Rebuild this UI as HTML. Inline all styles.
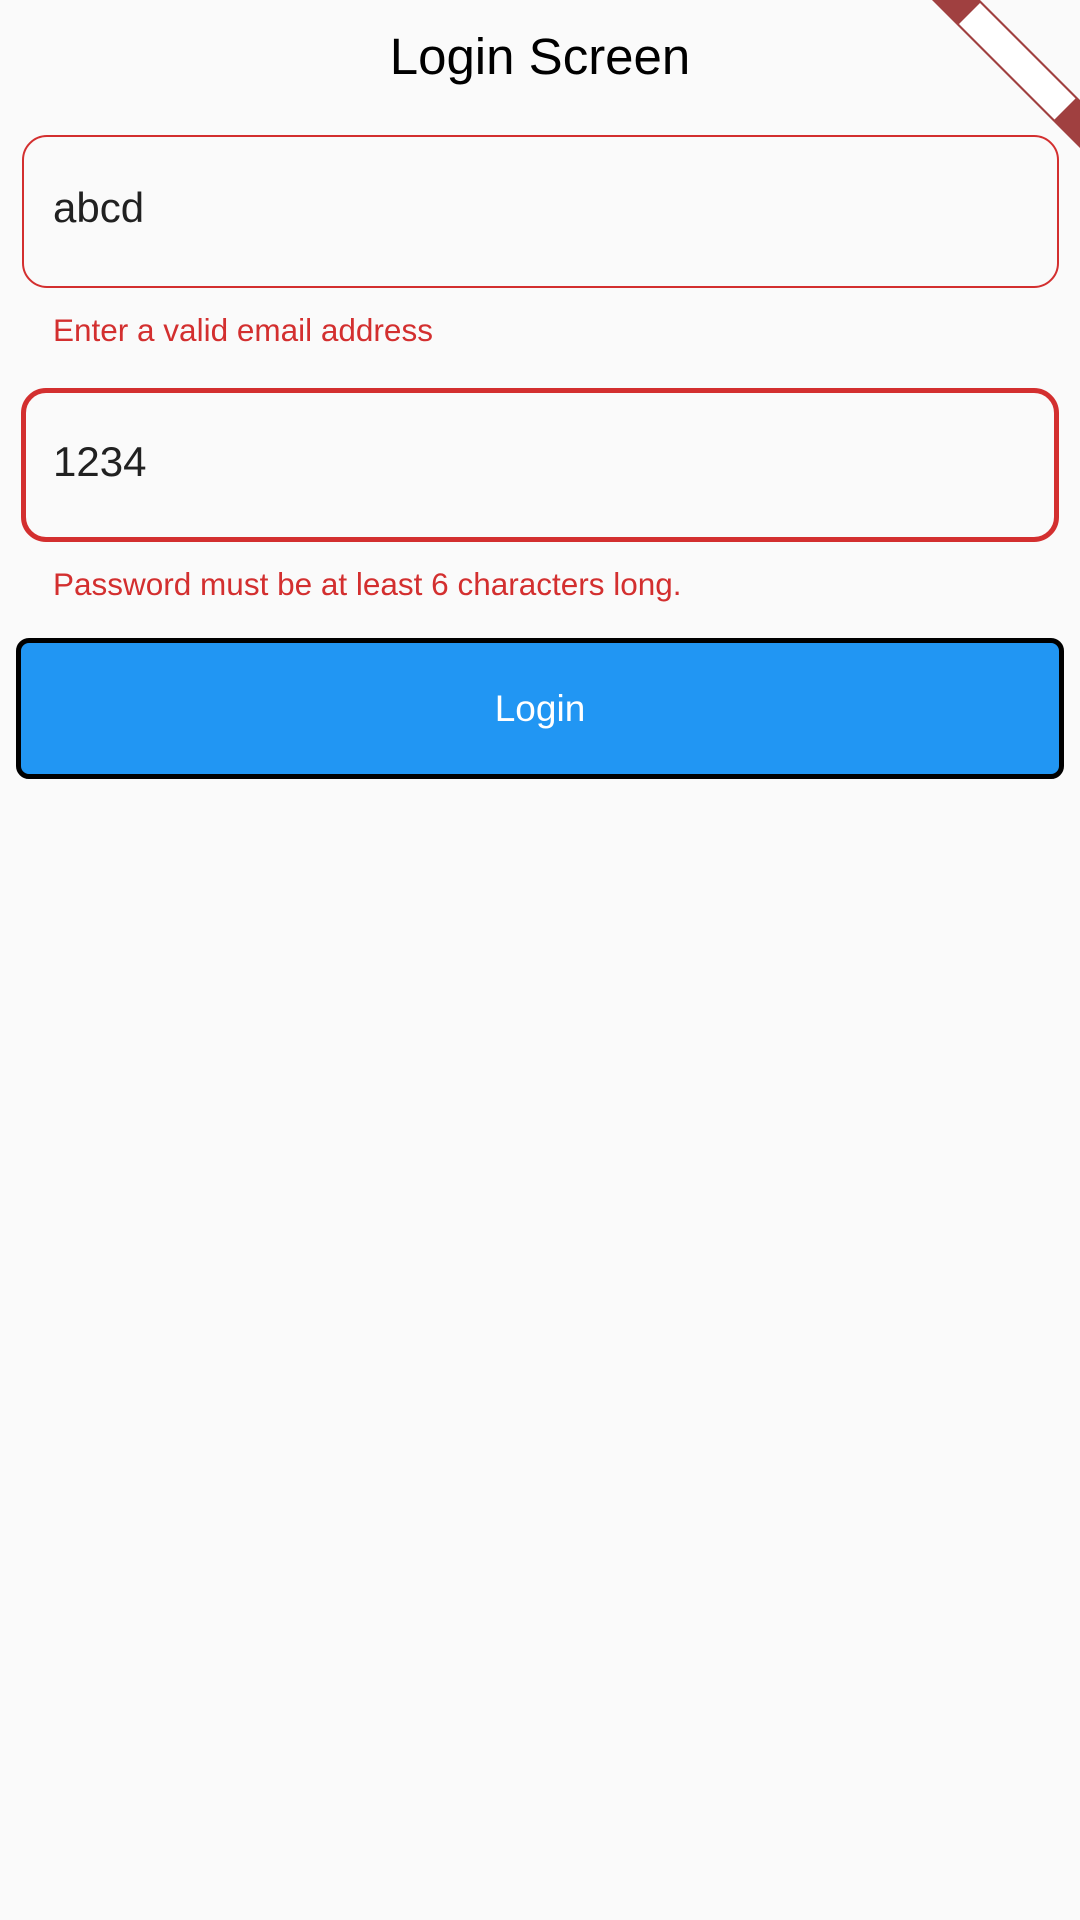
<!DOCTYPE html>
<html><head><meta charset="utf-8"><style>
html,body{margin:0;padding:0;width:1080px;height:1920px;background:#fafafa;overflow:hidden;font-family:"Liberation Sans",sans-serif;}
.abs{position:absolute;box-sizing:border-box;}
.title{left:0;width:1080px;top:22px;text-align:center;font-size:51px;line-height:70px;color:#000;}
.f1{left:22px;top:135px;width:1037px;height:153px;border:2.5px solid #d32f2f;border-radius:25px;}
.f2{left:21px;top:388px;width:1038px;height:154px;border:5px solid #d32f2f;border-radius:25px;}
.val{left:53px;font-size:42px;line-height:50px;color:#212121;}
.err{left:53px;font-size:31.5px;line-height:36px;color:#d32f2f;}
.btn{left:16px;top:638px;width:1048px;height:141px;border:5px solid #000;border-radius:13px;background:#2196f3;color:#fff;font-size:37px;text-align:center;line-height:131px;}
</style></head><body>
<div class="abs title">Login Screen</div>
<div class="abs f1"></div>
<div class="abs val" style="top:183px">abcd</div>
<div class="abs err" style="top:312px">Enter a valid email address</div>
<div class="abs f2"></div>
<div class="abs val" style="top:437px">1234</div>
<div class="abs err" style="top:566px">Password must be at least 6 characters long.</div>
<div class="abs btn">Login</div>
<svg class="abs" style="left:0;top:0" width="1080" height="160">
<polygon points="932,0 980,0 1080,100 1080,148" fill="#a04040"/>
<polygon points="959,24 980,3 1075.5,98.5 1054.5,119.5" fill="#fff"/>
</svg>
</body></html>
